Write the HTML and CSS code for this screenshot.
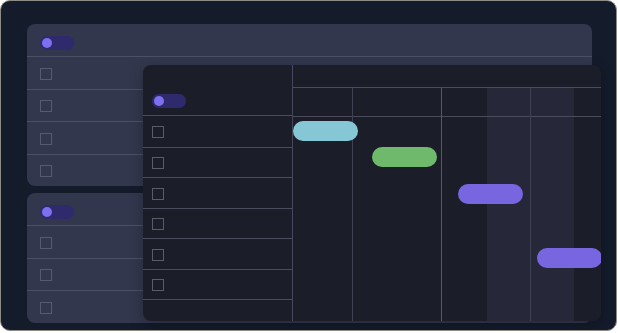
FILE: index.html
```html
<!DOCTYPE html>
<html lang="en">
<head>
    <meta charset="UTF-8">
    <meta name="viewport" content="width=device-width, initial-scale=1.0">
    <title>Timeline preview</title>
    <link rel="stylesheet" href="styles.css">
</head>
<body>
    <div class="frame">
        <div class="list-card">
            <div class="list-head"><span class="toggle"></span></div>
            <div class="list-row"><span class="check"></span></div>
            <div class="list-row"><span class="check"></span></div>
            <div class="list-row"><span class="check"></span></div>
            <div class="list-row"><span class="check"></span></div>
        </div>
        <div class="list-card">
            <div class="list-head"><span class="toggle"></span></div>
            <div class="list-row"><span class="check"></span></div>
            <div class="list-row"><span class="check"></span></div>
            <div class="list-row"><span class="check"></span></div>
        </div>

        <div class="gantt-panel">
            <div class="task-col">
                <div class="task-head"><span class="toggle"></span></div>
                <div class="task-row"><span class="check"></span></div>
                <div class="task-row"><span class="check"></span></div>
                <div class="task-row"><span class="check"></span></div>
                <div class="task-row"><span class="check"></span></div>
                <div class="task-row"><span class="check"></span></div>
                <div class="task-row"><span class="check"></span></div>
                <div class="task-row"></div>
            </div>
            <div class="timeline">
                <div class="timeline-top"></div>
                <div class="days">
                    <div class="day day-a"><div class="day-head"></div></div>
                    <div class="day day-b"><div class="day-head"></div></div>
                    <div class="day day-c today"><div class="day-head"></div></div>
                    <div class="day day-d weekend"><div class="day-head"></div></div>
                    <div class="day day-e weekend"><div class="day-head"></div></div>
                    <div class="day day-f"><div class="day-head"></div></div>
                </div>
                <div class="bar bar-cyan" style="left: 0; top: 56px;"></div>
                <div class="bar bar-green" style="left: 79px; top: 82px;"></div>
                <div class="bar bar-purple" style="left: 165px; top: 119px;"></div>
                <div class="bar bar-purple" style="left: 244px; top: 183px;"></div>
            </div>
        </div>
    </div>
</body>
</html>
```
FILE: styles.css
```css
body {
    margin: 0;
    background: #ffffff;
    font-family: "Liberation Sans", Arial, sans-serif;
}
.frame {
    position: relative;
    width: 617px;
    height: 331px;
    box-sizing: border-box;
    padding: 23px 0 0 26px;
    background: #141b2b;
    border: 1px solid #8e8b86;
    border-radius: 10px;
    overflow: hidden;
}
.list-card {
    width: 565px;
    background: #32374d;
    border-radius: 8px;
    margin-bottom: 7px;
}
.list-head {
    height: 32px;
    box-sizing: border-box;
    padding: 12px 0 0 13px;
}
.list-row {
    height: 32.5px;
    box-sizing: border-box;
    border-top: 1px solid #4c5065;
    display: flex;
    align-items: center;
    padding: 2px 0 0 13px;
}
.toggle {
    display: block;
    width: 34px;
    height: 14px;
    border-radius: 7px;
    background: #2e2a6c;
    position: relative;
}
.toggle::before {
    content: "";
    position: absolute;
    left: 2px;
    top: 2px;
    width: 10px;
    height: 10px;
    border-radius: 50%;
    background: #7c6ff0;
}
.check {
    width: 12px;
    height: 12px;
    box-sizing: border-box;
    border: 1px solid #575b6e;
}

/* front panel */
.gantt-panel {
    position: absolute;
    left: 142px;
    top: 64px;
    width: 458px;
    height: 256px;
    display: flex;
    background: #1b1e29;
    border-radius: 8px;
    overflow: hidden;
    box-shadow: 0 4px 14px rgba(0,0,0,0.25);
}
.task-col {
    width: 150px;
    box-sizing: border-box;
    border-right: 1px solid #45475a;
    flex-shrink: 0;
}
.task-head {
    height: 51px;
    box-sizing: border-box;
    display: flex;
    align-items: flex-end;
    padding: 0 0 7px 9px;
    border-bottom: 1px solid #4a4c5c;
}
.task-row {
    height: 30.5px;
    box-sizing: border-box;
    display: flex;
    align-items: center;
    padding: 2px 0 0 9px;
}
.task-row + .task-row {
    border-top: 1px solid #4a4c5c;
}
.task-row .check {
    border-color: #5a5c69;
}
.timeline {
    position: relative;
    flex: 1;
    display: flex;
    flex-direction: column;
}
.timeline-top {
    height: 23px;
    box-sizing: border-box;
    border-bottom: 1px solid #4a4c5c;
}
.days {
    flex: 1;
    display: flex;
}
.day {
    box-sizing: border-box;
}
.day-head {
    height: 29px;
    box-sizing: border-box;
    border-bottom: 1px solid #4a4c5c;
}
.day-a { width: 59px; }
.day-b { width: 89px; border-left: 1px solid #3f4152; }
.day-c { width: 46px; }
.day-d { width: 43px; }
.day-e { width: 44px; border-left: 1px solid #3f4152; }
.day-f { flex: 1; }
.today {
    border-left: 1px solid #5846c4;
}
.weekend {
    background: #262839;
}
.bar {
    position: absolute;
    width: 65px;
    height: 20px;
    border-radius: 10px;
}
.bar-cyan { background: #86c7d5; }
.bar-green { background: #6fb96a; }
.bar-purple { background: #7866e0; }
```
